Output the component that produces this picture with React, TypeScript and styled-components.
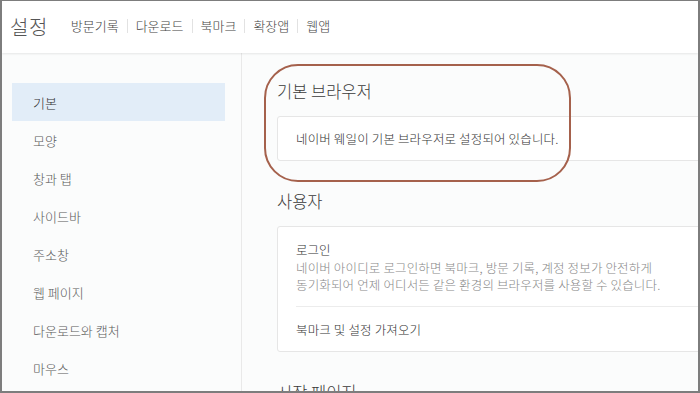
import * as React from 'react';
import styled, { createGlobalStyle } from 'styled-components';

const GlobalStyle = createGlobalStyle`
  html, body {
    margin: 0;
    padding: 0;
    background: #ffffff;
  }
  body {
    font-family: 'Noto Sans CJK KR', 'Noto Sans', sans-serif;
    font-weight: 300;
  }
`;

const navItems = ['방문기록', '다운로드', '북마크', '확장앱', '웹앱'];

const menuItems = [
  '기본',
  '모양',
  '창과 탭',
  '사이드바',
  '주소창',
  '웹 페이지',
  '다운로드와 캡처',
  '마우스'
];

const App: React.FunctionComponent = () => {
  const [selected, setSelected] = React.useState('기본');

  return (
    <React.Fragment>
      <GlobalStyle />
      <Frame>
        <Header>
          <Title>설정</Title>
          <Nav>
            {navItems.map((item, i) => (
              <NavItem key={item} first={i === 0}>
                {item}
              </NavItem>
            ))}
          </Nav>
        </Header>

        <Body>
          <Sidebar>
            {menuItems.map(item => (
              <MenuItem
                key={item}
                active={selected === item}
                onClick={() => setSelected(item)}
              >
                {item}
              </MenuItem>
            ))}
          </Sidebar>

          <Content>
            <Section>
              <SectionTitle>기본 브라우저</SectionTitle>
              <Card>
                <SimpleRow>네이버 웨일이 기본 브라우저로 설정되어 있습니다.</SimpleRow>
              </Card>
            </Section>

            <Section>
              <SectionTitle>사용자</SectionTitle>
              <Card>
                <LoginBlock>
                  <RowLabel>로그인</RowLabel>
                  <RowDesc>
                    네이버 아이디로 로그인하면 북마크, 방문 기록, 계정 정보가 안전하게
                    <br />
                    동기화되어 언제 어디서든 같은 환경의 브라우저를 사용할 수 있습니다.
                  </RowDesc>
                </LoginBlock>
                <SimpleRow divided>북마크 및 설정 가져오기</SimpleRow>
              </Card>
            </Section>

            <Section>
              <SectionTitle>시작 페이지</SectionTitle>
            </Section>

            {/* 기본 브라우저 강조 표시 */}
            <Highlight />
          </Content>
        </Body>
      </Frame>
    </React.Fragment>
  );
};

const Frame = styled('div')`
  box-sizing: border-box;
  width: 700px;
  height: 393px;
  border-style: solid;
  border-color: #7d7d7d;
  border-width: 1px 2px 2px 2px;
  overflow: hidden;
  display: flex;
  flex-direction: column;
  background: #fbfcfc;
`;

const Header = styled('div')`
  flex: 0 0 52px;
  display: flex;
  align-items: center;
  padding-left: 8px;
  padding-bottom: 2px;
  box-sizing: border-box;
  background: #ffffff;
  box-shadow: 0 1px 2px rgba(0, 0, 0, 0.09);
  position: relative;
  z-index: 1;
`;

const Title = styled('div')`
  font-size: 20px;
  color: #555;
  letter-spacing: 0.5px;
  margin-right: 15px;
`;

const Nav = styled('div')`
  display: flex;
  align-items: center;
`;

const NavItem = styled('div')<{ first: boolean }>`
  font-size: 13px;
  color: #444;
  padding: 0 8px;
  line-height: 14px;
  border-left: ${props => (props.first ? 'none' : '1px solid #e2e2e2')};
`;

const Body = styled('div')`
  flex: 1;
  display: flex;
  min-height: 0;
`;

const Sidebar = styled('div')`
  flex: 0 0 240px;
  box-sizing: border-box;
  padding: 30px 0 0 10px;
  border-right: 1px solid #e9e9e9;
  display: flex;
  flex-direction: column;
`;

const MenuItem = styled('div')<{ active: boolean }>`
  width: 213px;
  height: 38px;
  box-sizing: border-box;
  padding-left: 21px;
  display: flex;
  align-items: center;
  font-size: 13px;
  color: ${props => (props.active ? '#333' : '#5a5a5a')};
  background: ${props => (props.active ? '#e2edf8' : 'transparent')};
  cursor: pointer;
`;

const Content = styled('div')`
  position: relative;
  flex: 1;
  padding: 26px 0 0 35px;
  display: flex;
  flex-direction: column;
  gap: 28px;
`;

const Section = styled('div')`
  display: flex;
  flex-direction: column;
  gap: 13px;
`;

const SectionTitle = styled('div')`
  font-size: 16.5px;
  line-height: 24px;
  color: #3a3a3a;
`;

const Card = styled('div')`
  width: 470px;
  box-sizing: border-box;
  background: #ffffff;
  border: 1px solid #e6e6e6;
  border-radius: 3px;
  padding: 0 18px;
`;

const SimpleRow = styled('div')<{ divided?: boolean }>`
  height: ${props => (props.divided ? 45 : 43)}px;
  display: flex;
  align-items: center;
  font-size: 12.5px;
  letter-spacing: 0.15px;
  color: #333;
  border-top: ${props => (props.divided ? '1px solid #ececec' : 'none')};
  box-sizing: border-box;
`;

const LoginBlock = styled('div')`
  padding: 13px 0 13px;
`;

const RowLabel = styled('div')`
  font-size: 12.5px;
  line-height: 19px;
  color: #333;
`;

const RowDesc = styled('div')`
  font-size: 12.5px;
  letter-spacing: 0.15px;
  line-height: 17px;
  color: #888;
  white-space: nowrap;
`;

const Highlight = styled('div')`
  position: absolute;
  left: 22px;
  top: 11px;
  width: 307px;
  height: 118px;
  box-sizing: border-box;
  border: 2px solid #a5614c;
  border-radius: 34px;
  pointer-events: none;
`;

export default App;
